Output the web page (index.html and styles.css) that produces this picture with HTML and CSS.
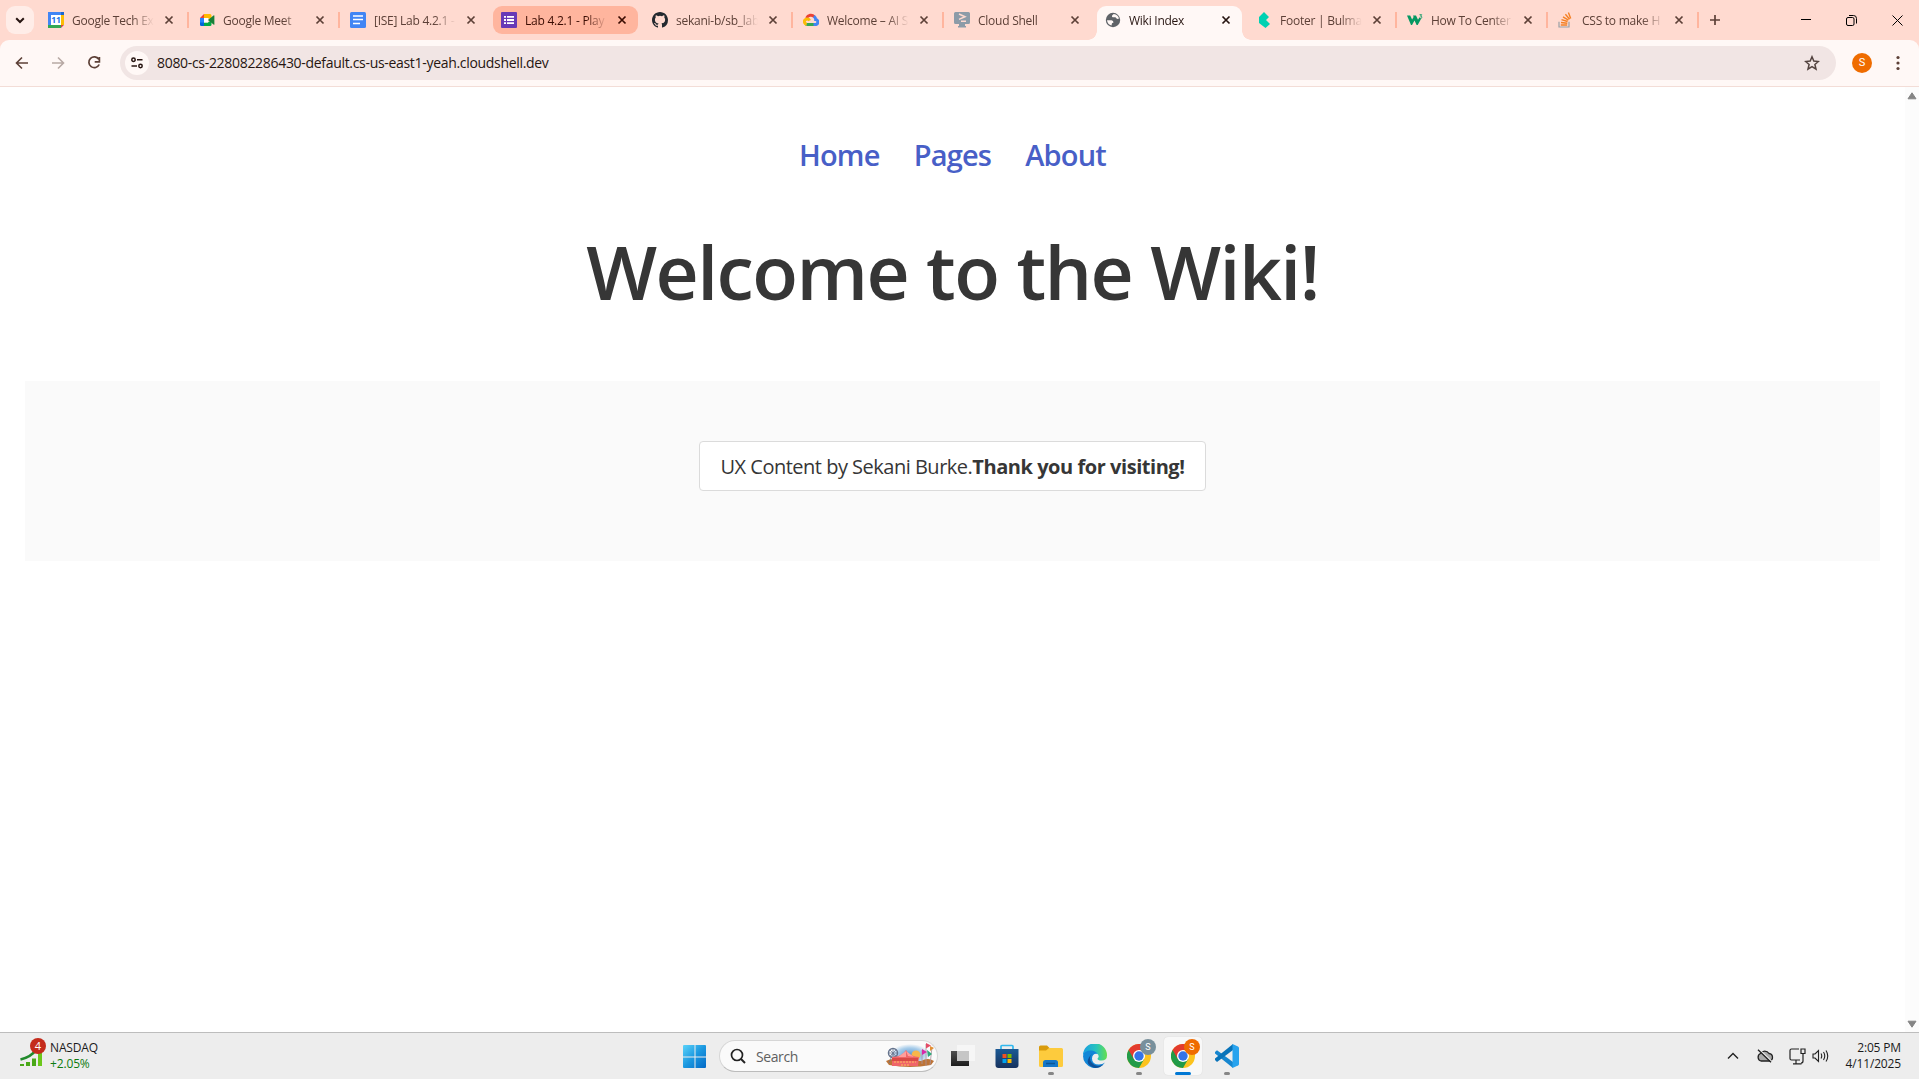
FILE: index.html
```html
<!DOCTYPE html>
<html lang="en">
<head>
<meta charset="utf-8">
<title>Wiki Index</title>
<link rel="stylesheet" href="styles.css">
</head>
<body>
<svg class="defs" width="0" height="0" aria-hidden="true">
  <defs>
    <symbol id="x" viewBox="0 0 10 10"><path d="M1.500 1.500l7 7M8.500 1.500l-7 7" fill="none" stroke="currentColor" stroke-width="1.700"/></symbol>
    <symbol id="chrome" viewBox="0 0 24 24">
      <circle cx="12" cy="12" r="12" fill="#fcc31e"/>
      <path d="M1.600 6A12 12 0 0 0 12 24l5.200-9H12z" fill="#229b48"/>
      <path d="M1.600 6A12 12 0 0 1 22.400 6H12L6.800 15z" fill="#e33b2e"/>
      <circle cx="12" cy="12" r="6" fill="#fff"/><circle cx="12" cy="12" r="4.700" fill="#3474e8"/>
    </symbol>
  </defs>
</svg>

<header class="tabs">
  <div class="search-tabs"><svg width="10" height="7" viewBox="0 0 10 7"><path d="M1.200 1.200L5 5l3.800-3.800" fill="none" stroke="#271511" stroke-width="2"/></svg></div>
  <div class="tab sep">
    <svg class="fav" viewBox="0 0 16 16"><path d="M0 0h16v16H0z" fill="#4285f4"/><path d="M13 3h3v10h-3z" fill="#fbbc04"/><path d="M0 13h13v3H0z" fill="#34a853"/><path d="M13 13h3l-3 3z" fill="#ea4335"/><path d="M13 16l3-3v3z" fill="#ffdad0"/><path d="M13 0h3v3h-3z" fill="#1967d2"/><path d="M3 3h10v10H3z" fill="#fff"/><text x="8" y="11.200" text-anchor="middle" font-size="8.500" font-weight="700" fill="#1a73e8">11</text></svg>
    <span class="title">Google Tech Ex</span><svg class="close"><use href="#x"/></svg>
  </div>
  <div class="tab sep">
    <svg class="fav" viewBox="0 0 16 16"><path d="M1 6h4v5H1z" fill="#2684fc"/><path d="M1 6l4-4v4z" fill="#ea4335"/><path d="M5 2h6q1.500 0 1.500 1.500V8L9 6H5z" fill="#ffba00"/><path d="M1 10.500h4V14H2.300Q1 14 1 12.700z" fill="#0066da"/><path d="M5 10.500h4L12.500 8v4.500Q12.500 14 11 14H5z" fill="#00ac47"/><path d="M9 8l5.500-4.600q.9-.6.900.5v8.300q0 1-.9.400z" fill="#188038"/><path d="M5 6h4v4.500H5z" fill="#fff"/></svg>
    <span class="title">Google Meet</span><svg class="close"><use href="#x"/></svg>
  </div>
  <div class="tab">
    <svg class="fav" viewBox="0 0 16 16"><rect width="16" height="16" rx="1.500" fill="#4285f4"/><path d="M3 4h10M3 7.500h10M3 11.500h7" stroke="#fff" stroke-width="1.700"/></svg>
    <span class="title">[ISE] Lab 4.2.1 -</span><svg class="close"><use href="#x"/></svg>
  </div>
  <div class="tab marked">
    <svg class="fav" viewBox="0 0 16 16"><rect width="16" height="16" rx="1" fill="#673ab7"/><path d="M6 4.800h7M6 8h7M6 11.200h7M3 4.800h2M3 8h2M3 11.200h2" stroke="#fff" stroke-width="1.800"/></svg>
    <span class="title">Lab 4.2.1 - Play</span><svg class="close"><use href="#x"/></svg>
  </div>
  <div class="tab sep">
    <svg class="fav" viewBox="0 0 16 16"><path fill="#24292f" d="M8 0C3.580 0 0 3.580 0 8c0 3.540 2.290 6.530 5.470 7.590.4.070.55-.17.55-.38 0-.19-.01-.82-.01-1.490-2.010.37-2.530-.49-2.690-.94-.09-.23-.48-.94-.82-1.130-.28-.15-.68-.52-.01-.53.63-.01 1.080.58 1.230.82.72 1.210 1.870.87 2.330.66.07-.52.280-.87.510-1.070-1.780-.2-3.640-.89-3.640-3.950 0-.87.310-1.590.82-2.150-.08-.2-.36-1.020.08-2.120 0 0 .67-.21 2.200.82a7.600 7.600 0 0 1 4 0c1.530-1.040 2.200-.82 2.200-.82.44 1.100.16 1.920.08 2.120.51.560.82 1.270.82 2.150 0 3.070-1.870 3.750-3.650 3.950.29.25.54.73.54 1.480 0 1.070-.01 1.930-.01 2.200 0 .21.150.46.550.38A8 8 0 0 0 16 8c0-4.420-3.580-8-8-8z"/></svg>
    <span class="title">sekani-b/sb_lab</span><svg class="close"><use href="#x"/></svg>
  </div>
  <div class="tab sep">
    <svg class="fav" viewBox="0 0 16 16" fill="none" stroke-width="3"><path d="M3.600 6A4.700 4.700 0 0 1 11.300 4.700" stroke="#ea4335"/><path d="M10.800 4.300Q12.700 5.600 12.700 7.600a2.500 2.500 0 0 1 .3 4.900H10" stroke="#4285f4"/><path d="M10.500 12.500H4.500q-1 0-1.700-.5" stroke="#34a853"/><path d="M3.700 12.300A2.700 2.700 0 1 1 6.600 8.600" stroke="#fbbc05"/></svg>
    <span class="title">Welcome – AI S</span><svg class="close"><use href="#x"/></svg>
  </div>
  <div class="tab">
    <svg class="fav" viewBox="0 0 16 16"><path d="M1.500 0h13Q16 0 16 1.500v9q0 1.500-1.500 1.500H11v2h1v1.500H4V14h1v-2H1.500Q0 12 0 10.500v-9Q0 0 1.500 0z" fill="#8c9ba8"/><path d="M5 2l6 2.800-6 2.600M7 9.300h5" fill="none" stroke="#ffdad0" stroke-width="1.500"/></svg>
    <span class="title">Cloud Shell</span><svg class="close"><use href="#x"/></svg>
  </div>
  <div class="tab active">
    <svg class="fav" viewBox="0 0 16 16"><circle cx="8" cy="8" r="7.200" fill="#5f6368"/><path d="M8.800 2Q6.500 2.800 7 5q1.500.5 3.500.3.500 1.200 2 1.700L14 6.500Q13 2.500 8.800 2zM2 8.200h4.500q2 .3 2 2.200-2 .2-2 3Q2.500 12.700 2 8.200z" fill="#fff8f6"/></svg>
    <span class="title">Wiki Index</span><svg class="close"><use href="#x"/></svg>
  </div>
  <div class="tab sep">
    <svg class="fav" viewBox="0 0 16 16"><path d="M3 5l5-5 5 5-3 3 4 4-4.500 4L3 11z" fill="#00d1b2"/></svg>
    <span class="title">Footer | Bulma:</span><svg class="close"><use href="#x"/></svg>
  </div>
  <div class="tab sep">
    <svg class="fav" viewBox="0 0 16 16"><path d="M0 3.500h3.200l1.900 4 1.500-2.500L6 3.500h3l2 4.300 1.500-2.500L14 7l-3.300 6H9.600L7.500 8.500 5 13H4z" fill="#059862"/><path d="M12.500 2.700h2.200l-1.200 1.500q1.600 0 1.400 1.400-.5 1.100-2 .6" fill="none" stroke="#059862" stroke-width=".9"/></svg>
    <span class="title">How To Center</span><svg class="close"><use href="#x"/></svg>
  </div>
  <div class="tab sep">
    <svg class="fav" viewBox="0 0 16 16" fill="none"><path d="M1 9.700V15h10V9.700" stroke="#9aa0a6" stroke-width="1.200"/><path d="M2.800 13h6.400M3 10.500l6.300.7M3.500 7.700l6.100 1.800M5 4.800l5.400 3.300M7.400 2.300l4.200 4.900M10.400 .5l2.300 6" stroke="#f48024" stroke-width="1.400"/></svg>
    <span class="title">CSS to make H</span><svg class="close"><use href="#x"/></svg>
  </div>
  <svg class="plus" width="12" height="12" viewBox="0 0 12 12"><path d="M6 1v10M1 6h10" stroke="#5d4037" stroke-width="1.700"/></svg>
  <div class="window-buttons">
    <svg width="10" height="10" viewBox="0 0 10 10"><path d="M0 4.500h10" stroke="#000"/></svg>
    <svg width="11" height="11" viewBox="0 0 11 11" fill="none" stroke="#000"><rect x=".5" y="2.500" width="7.500" height="8" rx="1.500"/><path d="M3 .5h4.500a3 3 0 0 1 3 3V8.500"/></svg>
    <svg width="11" height="11" viewBox="0 0 11 11"><path d="M.5.500l10 10M10.500.500l-10 10" stroke="#000"/></svg>
  </div>
</header>

<nav class="toolbar">
  <svg class="tool" viewBox="0 0 16 16"><path d="M14 8H3M8 2.500L2.500 8 8 13.500" fill="none" stroke="#5d4037" stroke-width="1.600"/></svg>
  <svg class="tool" viewBox="0 0 16 16"><path d="M2 8h11M8 2.500L13.500 8 8 13.500" fill="none" stroke="#b8a9a4" stroke-width="1.600"/></svg>
  <svg class="tool" viewBox="0 0 16 16"><path d="M12.800 4.300A5.400 5.400 0 1 0 13.200 9.500M13.400 2v4.800H8.700" fill="none" stroke="#5d4037" stroke-width="1.700"/></svg>
  <div class="omnibox">
    <span class="site"><svg width="14" height="14" viewBox="0 0 14 14" fill="none" stroke="#271511" stroke-width="1.500"><circle cx="3.500" cy="3.700" r="1.700"/><path d="M7 3.700h5.500M1.500 10h5.500"/><circle cx="10.500" cy="10" r="1.700"/></svg></span>
    <span class="url">8080-cs-228082286430-default.cs-us-east1-yeah.cloudshell.dev</span>
    <svg class="star" width="16" height="16" viewBox="0 0 16 16"><path d="M8 1.800l1.800 4.300 4.600.4-3.500 3 1.100 4.600L8 11.600l-4 2.500 1.100-4.600-3.500-3 4.600-.4z" fill="none" stroke="#53433f" stroke-width="1.500"/></svg>
  </div>
  <span class="avatar">S</span>
  <svg width="4" height="16" viewBox="0 0 4 16" fill="#5d4037"><circle cx="2" cy="2.500" r="1.600"/><circle cx="2" cy="8" r="1.600"/><circle cx="2" cy="13.500" r="1.600"/></svg>
</nav>

<div class="viewport">
  <main class="page">
    <div class="links"><a>Home</a><a>Pages</a><a>About</a></div>
    <h1>Welcome to the Wiki!</h1>
    <footer class="footer"><div class="button"><span class="credit">UX Content by Sekani Burke.</span><strong>Thank you for visiting!</strong></div></footer>
  </main>
  <div class="scrollbar">
    <svg width="10" height="8" viewBox="0 0 10 8"><path d="M5 .8L9 6.800H1z" fill="#858585" stroke="#858585" stroke-linejoin="round"/></svg>
    <svg width="10" height="8" viewBox="0 0 10 8"><path d="M5 7.200L9 1.200H1z" fill="#858585" stroke="#858585" stroke-linejoin="round"/></svg>
  </div>
</div>

<div class="taskbar">
  <div class="widget">
    <svg width="26" height="30" viewBox="0 0 26 30"><g fill="#4aa818"><path d="M0 26h4v2H0z"/><path d="M6 24h4v4H6zM12 20.500h4V28h-4z"/><path d="M18 15h4v13h-4z" fill="#6cc71c"/></g><path d="M.5 21.500Q11 19 16 12" fill="none" stroke="#218a2c" stroke-width="2.600"/><circle cx="18" cy="8" r="8" fill="#c42b1c"/><text x="18" y="12" text-anchor="middle" font-size="11" fill="#fff">4</text></svg>
    <div class="stock"><span>NASDAQ</span><span class="up">+2.05%</span></div>
  </div>
  <div class="apps">
    <svg class="start" width="24" height="24" viewBox="0 0 24 24"><defs><linearGradient id="win" x1="0" y1="0" x2="1" y2="1"><stop offset="0" stop-color="#5bd3fa"/><stop offset=".5" stop-color="#1b98e0"/><stop offset="1" stop-color="#0369c6"/></linearGradient></defs><path d="M1 0h10.500v11.500H0V1q0-1 1-1zM12.500 0H22q1 0 1 1v10.500H12.500zM0 12.500h11.500V23H1q-1 0-1-1zM12.500 12.500H23V22q0 1-1 1h-9.500z" fill="url(#win)"/></svg>
    <div class="search">
      <svg width="16" height="16" viewBox="0 0 16 16"><circle cx="7" cy="7" r="5.500" fill="none" stroke="#222" stroke-width="1.700"/><path d="M11 11l4 4" stroke="#222" stroke-width="2"/></svg>
      <span>Search</span>
      <svg width="48" height="26" viewBox="0 0 48 26"><defs><radialGradient id="sky"><stop offset="0" stop-color="#5594d0"/><stop offset=".65" stop-color="#a9cdea"/><stop offset="1" stop-color="#fafafa"/></radialGradient></defs><ellipse cx="24" cy="12" rx="20" ry="11" fill="url(#sky)"/><circle cx="30" cy="12" r="4.500" fill="#f7b64b"/><path d="M0 18q8-4 13 0h22q7-4 13 0l-3 4q-21 4-42 0z" fill="#bd7436"/><g fill="none" stroke="#65738d"><circle cx="7" cy="10" r="4.500" stroke-width="1.500"/><path d="M2.500 10h9M7 5.500v9M4 7l6 6M10 7l-6 6M7 10l-4 10M7 10l4 10" stroke-width=".7"/></g><path d="M6 14q10 0 14-7 4 7 13 7l-1 9H6z" fill="#ef6569"/><path d="M12 14l8-6v6zM22 13l-2-5 8 6z" fill="#ff9e9c"/><path d="M6 15h26v3H6z" fill="#d94a46"/><path d="M8 19h22" stroke="#ffc15c" stroke-dasharray="2 1"/><path d="M15 22h8" stroke="#ffc15c" stroke-dasharray="2 1"/><path d="M40 1v22M46 4l-2 18M36 7v14" stroke="#a9929c" stroke-width=".8"/><path d="M40 0l5 2.500-5 3z" fill="#e44b67"/><path d="M36 6l5 3-5 3z" fill="#d829a8"/><path d="M41 7l5 4-4 3z" fill="#2ba879"/><path d="M44 3l4 2-4 3z" fill="#e29035"/></svg>
    </div>
    <span class="app"><svg viewBox="0 0 24 24"><defs><linearGradient id="dark" x1="0" y1="0" x2="0" y2="1"><stop offset="0" stop-color="#505050"/><stop offset="1" stop-color="#1c1c1c"/></linearGradient></defs><path d="M0 7h18v15H0z" fill="url(#dark)"/><path d="M6 1h18v16H6z" fill="#f6f6f6"/><path d="M6 7h12v10H6z" fill="#c6c6c6"/></svg></span>
    <span class="app"><svg viewBox="0 0 24 24"><defs><linearGradient id="bag" x1="0" y1="0" x2="0" y2="1"><stop offset="0" stop-color="#1b5a95"/><stop offset="1" stop-color="#17325e"/></linearGradient></defs><path d="M6 5V2.500Q6 1.500 7 1.500h10q1 0 1 1V5" fill="none" stroke="#31b8ee" stroke-width="1.700"/><path d="M.5 5h23v16q0 3-3 3h-17q-3 0-3-3z" fill="url(#bag)"/><path d="M7.500 10h4v4h-4z" fill="#f25022"/><path d="M12.500 10h4v4h-4z" fill="#7fba00"/><path d="M7.500 15h4v4h-4z" fill="#00a4ef"/><path d="M12.500 15h4v4h-4z" fill="#ffb900"/></svg></span>
    <span class="app run"><svg viewBox="0 0 24 24"><path d="M0 3q0-1.500 1.500-1.500H8L10.500 4v4H0z" fill="#d99b0b"/><path d="M0 6.500h7L10 4h12.500Q24 4 24 5.500v16q0 1.500-1.500 1.500h-21Q0 23 0 21.500z" fill="#fdcb3d"/><path d="M4 23v-4.500Q4 16 6.500 16h10q2.500 0 2.500 2.500V23z" fill="#1577c8"/><path d="M7 19.500h9" stroke="#0c5696" stroke-width="1.500"/></svg></span>
    <span class="app"><svg viewBox="0 0 24 24"><defs><linearGradient id="edge"><stop offset="0" stop-color="#1b9ee2"/><stop offset=".55" stop-color="#28c3bd"/><stop offset="1" stop-color="#64df4e"/></linearGradient></defs><path d="M0 11A12 12 0 0 1 24 11.500q0 5-5.500 5-4 0-4-2 2-1.500.5-4Q10 4.500 0 11z" fill="url(#edge)"/><path d="M0 12Q1 6.500 8 6.500q4.500 0 6.500 3.500-5-1-5.500 4.500 0 6 7 6 3.500 0 6-2A12 12 0 0 1 0 12z" fill="#1286d7"/><path d="M9 9.800Q5 14 9 19q4 5 11.500 1.500Q17 24 12 24-1 20 9 9.800z" fill="#0f5099"/></svg></span>
    <span class="app run"><svg viewBox="0 0 24 24"><use href="#chrome"/></svg><b class="profile slate">S</b></span>
    <span class="app current"><svg viewBox="0 0 24 24"><use href="#chrome"/></svg><b class="profile">S</b></span>
    <span class="app run"><svg viewBox="0 0 24 24"><path d="M0 8l2-1.700L18 18v6L0 9.500z" fill="#1686cf"/><path d="M0 16l2 2L18 6V0L0 14.500z" fill="#0873b9"/><path d="M17.500 0l5.500 2.500q1 .5 1 1.500v16q0 1-1 1.500L17.500 24z" fill="#28a3ee"/></svg></span>
  </div>
  <div class="tray">
    <svg width="12" height="8" viewBox="0 0 12 8"><path d="M1 6.500l5-5 5 5" fill="none" stroke="#222" stroke-width="1.400"/></svg>
    <svg class="cloud" width="18" height="14" viewBox="0 0 18 14"><path d="M5 12a4 4 0 0 1-.5-7.500A5 5 0 0 1 13 4.500 3.800 3.800 0 0 1 13.500 12z" fill="#aaa" stroke="#222" stroke-width="1.300"/><path d="M3 .3l13 12.500" stroke="#ededed" stroke-width="1.500"/><path d="M2 .8l13 12.500" stroke="#222" stroke-width="1.300"/></svg>
    <svg class="net" width="17" height="17" viewBox="0 0 17 17" fill="none" stroke="#222" stroke-width="1.200"><path d="M10 1H2.500Q1 1 1 2.500v8Q1 12 2.500 12H11M7 12v3.500M4 15.800h8.500M12 1h4v4.500h-4zM14 5.500V13q0 2-2 2"/></svg>
    <svg class="vol" width="17" height="14" viewBox="0 0 17 14" fill="none" stroke="#222" stroke-width="1.100"><path d="M1 5h2l3.500-3.500v11L3 9H1zM9 4.500q1.500 2.500 0 5M11.500 3q2.500 4 0 8M14 1.500q3.500 5.500 0 11"/></svg>
    <div class="clock"><span>2:05 PM</span><span>4/11/2025</span></div>
  </div>
</div>
</body>
</html>
```
FILE: styles.css
```css
* { box-sizing: border-box; }
body {
  margin: 0;
  width: 1919px;
  height: 1079px;
  display: flex;
  flex-direction: column;
  overflow: hidden;
  background: #ffdad0;
  font-family: "Open Sans", "Noto Sans", sans-serif;
}
svg { flex: none; display: block; }
.defs { position: absolute; }

/* tab strip */
.tabs {
  height: 40px;
  display: flex;
  align-items: flex-start;
  gap: 6px;
  padding: 6px 16px 0 6px;
}
.search-tabs {
  width: 28px;
  height: 28px;
  border-radius: 9px;
  background: #ffede8;
  display: grid;
  place-items: center;
}
.tab {
  position: relative;
  width: 145px;
  height: 28px;
  flex: none;
  display: flex;
  align-items: center;
  padding: 0 11px 0 8px;
  border-radius: 9px;
  color: #5d4037;
  font-size: 12px;
}
.tab.sep::after {
  content: "";
  position: absolute;
  right: -4px;
  top: 6px;
  width: 2px;
  height: 16px;
  background: #ffb59e;
}
.fav { width: 16px; height: 16px; margin-right: 8px; }
.title {
  flex: none;
  width: 86px;
  white-space: nowrap;
  letter-spacing: -.25px;
  -webkit-mask-image: linear-gradient(90deg, #000 60px, transparent 82px);
  mask-image: linear-gradient(90deg, #000 60px, transparent 82px);
}
.close { width: 10px; height: 10px; margin-left: auto; }
.marked { background: #ffb59e; color: #3a0b01; }
.active {
  height: 34px;
  padding-bottom: 6px;
  background: #fff8f6;
  color: #271511;
  border-radius: 9px 9px 0 0;
}
.active::before, .active::after {
  content: "";
  position: absolute;
  bottom: 0;
  width: 9px;
  height: 9px;
}
.active::before { left: -9px; background: radial-gradient(circle at 0 0, transparent 8.5px, #fff8f6 9px); }
.active::after { right: -9px; background: radial-gradient(circle at 100% 0, transparent 8.5px, #fff8f6 9px); }
.plus { margin: 8px 0 0 8px; }
.window-buttons { margin: 9px 0 0 auto; display: flex; gap: 35px; }

/* toolbar */
.toolbar {
  height: 47px;
  display: flex;
  align-items: center;
  padding: 0 19px 1px 14px;
  background: #fff8f6;
  border-bottom: 1px solid #f3ddd7;
  border-radius: 9px 9px 0 0;
}
.tool { width: 16px; height: 16px; margin-right: 20px; }
.omnibox {
  flex: 1;
  height: 34px;
  margin-left: -2px;
  border-radius: 17px;
  background: #f1e5e4;
  display: flex;
  align-items: center;
  padding: 0 16px 0 5px;
}
.site {
  width: 24px;
  height: 24px;
  border-radius: 50%;
  background: #fff8f6;
  display: grid;
  place-items: center;
}
.url { margin-left: 8px; font-size: 14px; letter-spacing: -.31px; color: #271511; }
.star { margin-left: auto; }
.avatar {
  width: 20px;
  height: 20px;
  margin: 0 24px 0 16px;
  border-radius: 50%;
  background: #ef6c00;
  color: #fff;
  font: 11px/20px Roboto, sans-serif;
  text-align: center;
}

/* page */
.viewport { flex: 1; min-height: 0; display: flex; background: #fff; }
.page { flex: 1; padding: 44px 25px 0; }
.links {
  display: flex;
  justify-content: center;
  gap: 34px;
  height: 48px;
  font-size: 29px;
  line-height: 48px;
  font-weight: 600;
  letter-spacing: -.8px;
  color: #485fc7;
}
h1 {
  margin: 44px 0 0;
  height: 96px;
  line-height: 96px;
  font-size: 75px;
  font-weight: 600;
  letter-spacing: -1.55px;
  color: #363636;
  text-align: center;
  white-space: nowrap;
}
.footer {
  height: 180px;
  margin-top: 62px;
  padding-top: 60px;
  background: #fafafa;
  display: flex;
  justify-content: center;
  align-items: flex-start;
}
.button {
  width: 507px;
  height: 50px;
  border: 1px solid #dbdbdb;
  border-radius: 4px;
  background: #fff;
  display: flex;
  justify-content: center;
  line-height: 49px;
  font-size: 20px;
  color: #363636;
  white-space: nowrap;
}
.credit { letter-spacing: -.5px; }
.button strong { letter-spacing: -.45px; font-weight: 700; }
.scrollbar {
  width: 14px;
  background: #fcfcfc;
  display: flex;
  flex-direction: column;
  justify-content: space-between;
  align-items: center;
  padding: 5px 0 4px;
}

/* taskbar */
.taskbar {
  height: 47px;
  border-top: 1px solid #bdbdbd;
  background: #ededed;
  display: grid;
  grid-template-columns: 683px 1fr auto;
  color: #1b1b1b;
  font-size: 12px;
}
.widget { display: flex; padding: 5px 0 0 20px; gap: 4px; }
.stock { display: flex; flex-direction: column; line-height: 16px; padding-top: 2px; letter-spacing: -.15px; }
.up { color: #0f7b0f; }
.apps { display: flex; align-items: flex-start; }
.start { margin-top: 12px; }
.search {
  width: 219px;
  height: 32px;
  margin: 7px 3px 0 12px;
  border: 1px solid #d6d6d6;
  border-bottom-color: #bcbcbc;
  border-radius: 16px;
  background: #fafafa;
  display: flex;
  align-items: center;
  padding: 0 3px 0 10px;
  font-size: 14px;
  letter-spacing: -.4px;
  color: #606060;
}
.search span { margin: 0 auto 0 10px; }
.app {
  position: relative;
  width: 38px;
  height: 38px;
  margin: 4px 3px 0;
  border-radius: 4px;
  padding: 7px;
}
.app svg { width: 24px; height: 24px; }
.app.run::after, .app.current::after {
  content: "";
  position: absolute;
  left: 16px;
  bottom: 0;
  width: 6px;
  height: 3px;
  border-radius: 2px;
  background: #868686;
}
.app.current { background: #f8f8f8; box-shadow: 0 0 1px #ccc; }
.app.current::after { left: 11px; width: 16px; background: #0078d4; }
.profile {
  position: absolute;
  left: 20px;
  top: 2px;
  width: 16px;
  height: 16px;
  border-radius: 50%;
  background: #ef6c00;
  color: #fff;
  font: 9px/16px Roboto, sans-serif;
  text-align: center;
}
.profile.slate { background: #78909c; }
.tray { display: flex; align-items: center; padding-right: 18px; }
.cloud { margin-left: 17px; }
.net { margin-left: 15px; }
.vol { margin-left: 6px; }
.clock {
  width: 72px;
  display: flex;
  flex-direction: column;
  align-items: flex-end;
  line-height: 16px;
  letter-spacing: -.15px;
}
```
